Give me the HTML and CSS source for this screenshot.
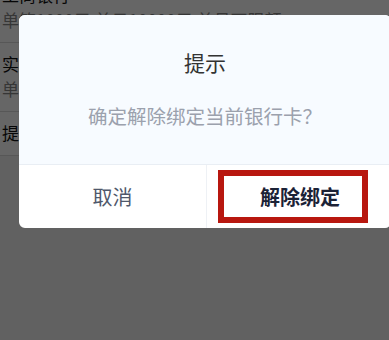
FILE: index.html
```html
<!DOCTYPE html>
<html lang="zh-CN">
<head>
<meta charset="utf-8">
<title>解除绑定</title>
<link rel="stylesheet" href="styles.css">
</head>
<body>
<div class="page">
  <div class="item first">
    <div class="main">工商银行</div>
    <div class="sub">单笔1000元 单日10000元 单月不限额</div>
  </div>
  <div class="item">
    <div class="main">实时到账</div>
    <div class="sub">单笔50000元 单日50000元</div>
  </div>
  <div class="item">
    <div class="main">提现记录</div>
  </div>
</div>
<div class="mask">
  <div class="dialog">
    <div class="dialog-body">
      <div class="dialog-title">提示</div>
      <div class="dialog-msg">确定解除绑定当前银行卡？</div>
    </div>
    <div class="dialog-actions">
      <div class="btn cancel">取消</div>
      <div class="btn confirm">解除绑定<span class="mark"></span></div>
    </div>
  </div>
</div>
</body>
</html>
```
FILE: styles.css
```css
html, body {
  margin: 0;
  padding: 0;
  width: 389px;
  height: 340px;
  overflow: hidden;
}
body {
  position: relative;
  background: #f3f3f3;
  font-family: "Noto Sans CJK SC", "Noto Sans", sans-serif;
}
.page {
  display: flex;
  flex-direction: column;
}
.item {
  background: #fff;
  padding: 8px 0 10px 2px;
  border-bottom: 1px solid #d9d9d9;
  font-size: 17px;
  line-height: 25px;
}
.item.first {
  margin-top: -26px;
}
.main {
  color: #111;
}
.sub {
  color: #888;
}
.mask {
  position: absolute;
  inset: 0;
  background: rgba(0, 0, 0, 0.6);
  padding: 15px 0 0 19px;
  overflow: hidden;
}
.dialog {
  width: 372px;
  border-radius: 6px;
  overflow: hidden;
  background: #fff;
}
.dialog-body {
  background: #f7fbff;
  height: 150px;
  box-sizing: border-box;
  padding-top: 32px;
  display: flex;
  flex-direction: column;
  align-items: center;
  border-bottom: 1px solid #e9eef4;
}
.dialog-title {
  font-size: 21px;
  line-height: 30px;
  color: #333;
}
.dialog-msg {
  margin-top: 25px;
  font-size: 19.5px;
  line-height: 28px;
  color: #9ba1ad;
  font-feature-settings: "fwid";
}
.dialog-actions {
  display: flex;
  height: 63px;
}
.btn {
  display: flex;
  align-items: center;
  justify-content: center;
  font-size: 20px;
}
.cancel {
  width: 187px;
  color: #4f586b;
  border-right: 1px solid #eef1f5;
}
.confirm {
  flex: 1;
  position: relative;
  color: #1b2236;
  font-weight: bold;
  padding-left: 2px;
}
.mark {
  position: absolute;
  left: 11px;
  top: 5px;
  width: 150px;
  height: 53px;
  box-sizing: border-box;
  border: 6px solid #b8170f;
}
```
